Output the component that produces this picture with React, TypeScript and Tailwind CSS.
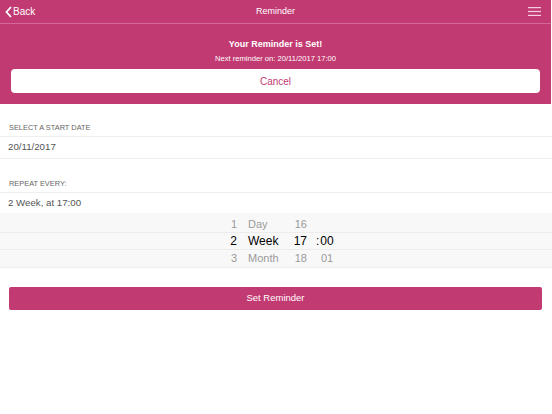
import React from "react";

const PICKER = [
  { n: "1", unit: "Day", h: "16", m: "", active: false, row: "h-[19px] pt-[4px]" },
  { n: "2", unit: "Week", h: "17", m: "00", active: true, row: "h-[17px] border-t border-[#ececec]" },
  { n: "3", unit: "Month", h: "18", m: "01", active: false, row: "h-[18px] border-t border-[#ececec]" },
];

export default function App() {
  return (
    <div className="w-[552px] h-[414px] bg-white font-['Liberation_Sans',Arial,sans-serif] overflow-hidden">
      {/* Pink header + status */}
      <div className="w-[551px] bg-[#c23a72]">
        <div className="h-[24px] flex items-center justify-between px-[5px] border-b border-[#d4689a]">
          <div className="flex items-center text-white text-[10px] w-[60px]">
            <svg width="7" height="12" viewBox="0 0 7 12" className="mr-[1px]">
              <path d="M6 1 L1.5 6 L6 11" stroke="white" strokeWidth="1.8" fill="none" />
            </svg>
            <span>Back</span>
          </div>
          <span className="text-white text-[9px] font-light">Reminder</span>
          <div className="w-[60px] flex justify-end pr-[5px]">
            <svg width="13" height="9" viewBox="0 0 13 9">
              <rect x="0" y="0" width="13" height="1.2" fill="#f3cfe0" />
              <rect x="0" y="3.9" width="13" height="1.2" fill="#f3cfe0" />
              <rect x="0" y="7.8" width="13" height="1.2" fill="#f3cfe0" />
            </svg>
          </div>
        </div>
        <div className="flex flex-col items-center pt-[15px] pb-[11px] px-[11px]">
          <p className="text-white text-[9px] font-bold leading-[11px]">Your Reminder is Set!</p>
          <p className="text-white text-[7.6px] leading-[10px] mt-[4px]">Next reminder on: 20/11/2017 17:00</p>
          <button className="mt-[5px] w-full h-[24px] bg-white rounded-[4px] text-[#c23a72] text-[10px]">
            Cancel
          </button>
        </div>
      </div>

      {/* Start date */}
      <div className="pt-[19px]">
        <p className="px-[9px] text-[7.4px] leading-[10px] text-[#666] uppercase h-[13px]">Select a start date</p>
        <div className="h-[23px] flex items-center px-[8px] border-t border-b border-[#efefef] text-[9.7px] text-[#555]">
          20/11/2017
        </div>
      </div>

      {/* Repeat */}
      <div className="pt-[20px]">
        <p className="px-[9px] text-[7.4px] leading-[10px] text-[#666] uppercase h-[13px]">Repeat every:</p>
        <div className="h-[21px] flex items-center px-[8px] border-t border-[#efefef] text-[9.7px] text-[#555]">
          2 Week, at 17:00
        </div>
      </div>

      {/* Picker */}
      <div className="bg-[#f8f8f8] border-b border-[#efefef]">
        {PICKER.map(row => (
          <div
            key={row.n}
            className={`flex items-center ${row.row} ${
              row.active ? "text-black text-[12px]" : "text-[#9a9a9a] text-[11px]"
            }`}
          >
            <span className="w-[237px] text-right">{row.n}</span>
            <span className="ml-[11px] w-[45px]">{row.unit}</span>
            <span className="w-[14px] text-right">{row.h}</span>
            <span className="ml-[9px]">{row.active ? ":" : ""}</span>
            <span className={row.active ? "ml-[1px]" : "ml-[5px]"}>{row.m}</span>
          </div>
        ))}
      </div>

      <div className="px-[9px] pt-[16px]">
        <button className="w-[533px] h-[23px] bg-[#c23a72] rounded-[2px] text-white text-[9.5px]">
          Set Reminder
        </button>
      </div>
    </div>
  );
}
